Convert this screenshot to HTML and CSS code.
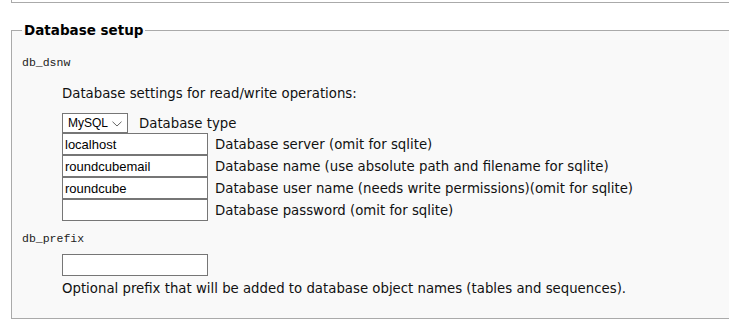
FILE: index.html
```html
<!DOCTYPE html>
<html lang="en">
<head>
    <meta charset="UTF-8">
    <title>Roundcube Webmail Installer</title>
    <link rel="stylesheet" href="styles.css">
</head>
<body>
    <div class="prev-block"></div>

    <fieldset class="setup">
        <legend>Database setup</legend>
        <dl class="configblock">
            <dt class="propname">db_dsnw</dt>
            <dd>
                <p class="desc">Database settings for read/write operations:</p>
                <div class="dbrow dbrow-select">
                    <span class="select-wrap">
                        <select name="_dbtype">
                            <option>MySQL</option>
                            <option>PostgreSQL</option>
                            <option>SQLite</option>
                        </select>
                        <svg class="chev" width="10" height="6" viewBox="0 0 10 6"><path d="M0.5 0.7 L5 5 L9.5 0.7" fill="none" stroke="#666" stroke-width="1"/></svg>
                    </span>
                    <label>Database type</label>
                </div>
                <div class="dbrow">
                    <input type="text" value="localhost">
                    <label>Database server (omit for sqlite)</label>
                </div>
                <div class="dbrow">
                    <input type="text" value="roundcubemail">
                    <label>Database name (use absolute path and filename for sqlite)</label>
                </div>
                <div class="dbrow">
                    <input type="text" value="roundcube">
                    <label>Database user name (needs write permissions)(omit for sqlite)</label>
                </div>
                <div class="dbrow">
                    <input type="password" value="">
                    <label>Database password (omit for sqlite)</label>
                </div>
            </dd>

            <dt class="propname">db_prefix</dt>
            <dd>
                <input type="text" class="prefix" value="">
                <p class="hint">Optional prefix that will be added to database object names (tables and sequences).</p>
            </dd>
        </dl>
    </fieldset>
</body>
</html>
```

FILE: styles.css
```css
body {
    margin: 0;
    padding: 0;
    background-color: #ffffff;
    color: #111111;
    font-family: "DejaVu Sans", Verdana, sans-serif;
    font-size: 13.3px;
    overflow: hidden;
}
.prev-block {
    margin-left: 11px;
    height: 2px;
    border-left: 1px solid #aaaaaa;
    border-bottom: 1px solid #aaaaaa;
}
.setup {
    margin: 18px 0 0 11px;
    padding: 0 10px 21px 10px;
    border: 1px solid #aaaaaa;
    border-right: none;
    background-color: #f9f9f9;
}
.setup legend {
    padding: 0 2px;
    font-size: 13.5px;
    line-height: 18px;
    font-weight: bold;
    color: #000000;
}
.configblock {
    margin: 0;
}
.propname {
    margin-top: 17px;
    font-family: "Liberation Mono", "Courier New", monospace;
    font-size: 11.5px;
    line-height: 14px;
    color: #222222;
}
.configblock dd {
    margin: 0 0 0 40px;
}
.desc {
    margin: 16px 0 11px 0;
    line-height: 16px;
}
.dbrow {
    display: flex;
    align-items: center;
    height: 22px;
}
.dbrow-select {
    height: 20px;
}
.dbrow label {
    margin-left: 7px;
}
.dbrow-select label {
    margin-left: 11px;
}
.select-wrap {
    position: relative;
    display: inline-block;
}
.select-wrap select {
    appearance: none;
    -webkit-appearance: none;
    width: 66px;
    height: 20px;
    margin: 0;
    padding: 0 0 0 5px;
    border: 1px solid #767676;
    border-radius: 0;
    background-color: #ffffff;
    font-family: "Liberation Sans", Tahoma, sans-serif;
    font-size: 12px;
    color: #000000;
}
.chev {
    position: absolute;
    right: 6px;
    top: 8px;
    pointer-events: none;
}
.configblock input {
    box-sizing: border-box;
    width: 146px;
    height: 22px;
    margin: 0;
    padding: 0 2px;
    border: 1px solid #767676;
    background-color: #ffffff;
    font-family: "Liberation Sans", Tahoma, sans-serif;
    font-size: 13px;
    color: #000000;
}
.configblock input:focus {
    outline: none;
}
.propname + dd + .propname {
    margin-top: 11px;
}
.prefix {
    margin-top: 8px !important;
    display: block;
}
.hint {
    margin: 5px 0 0 0;
    line-height: 16px;
}
```
